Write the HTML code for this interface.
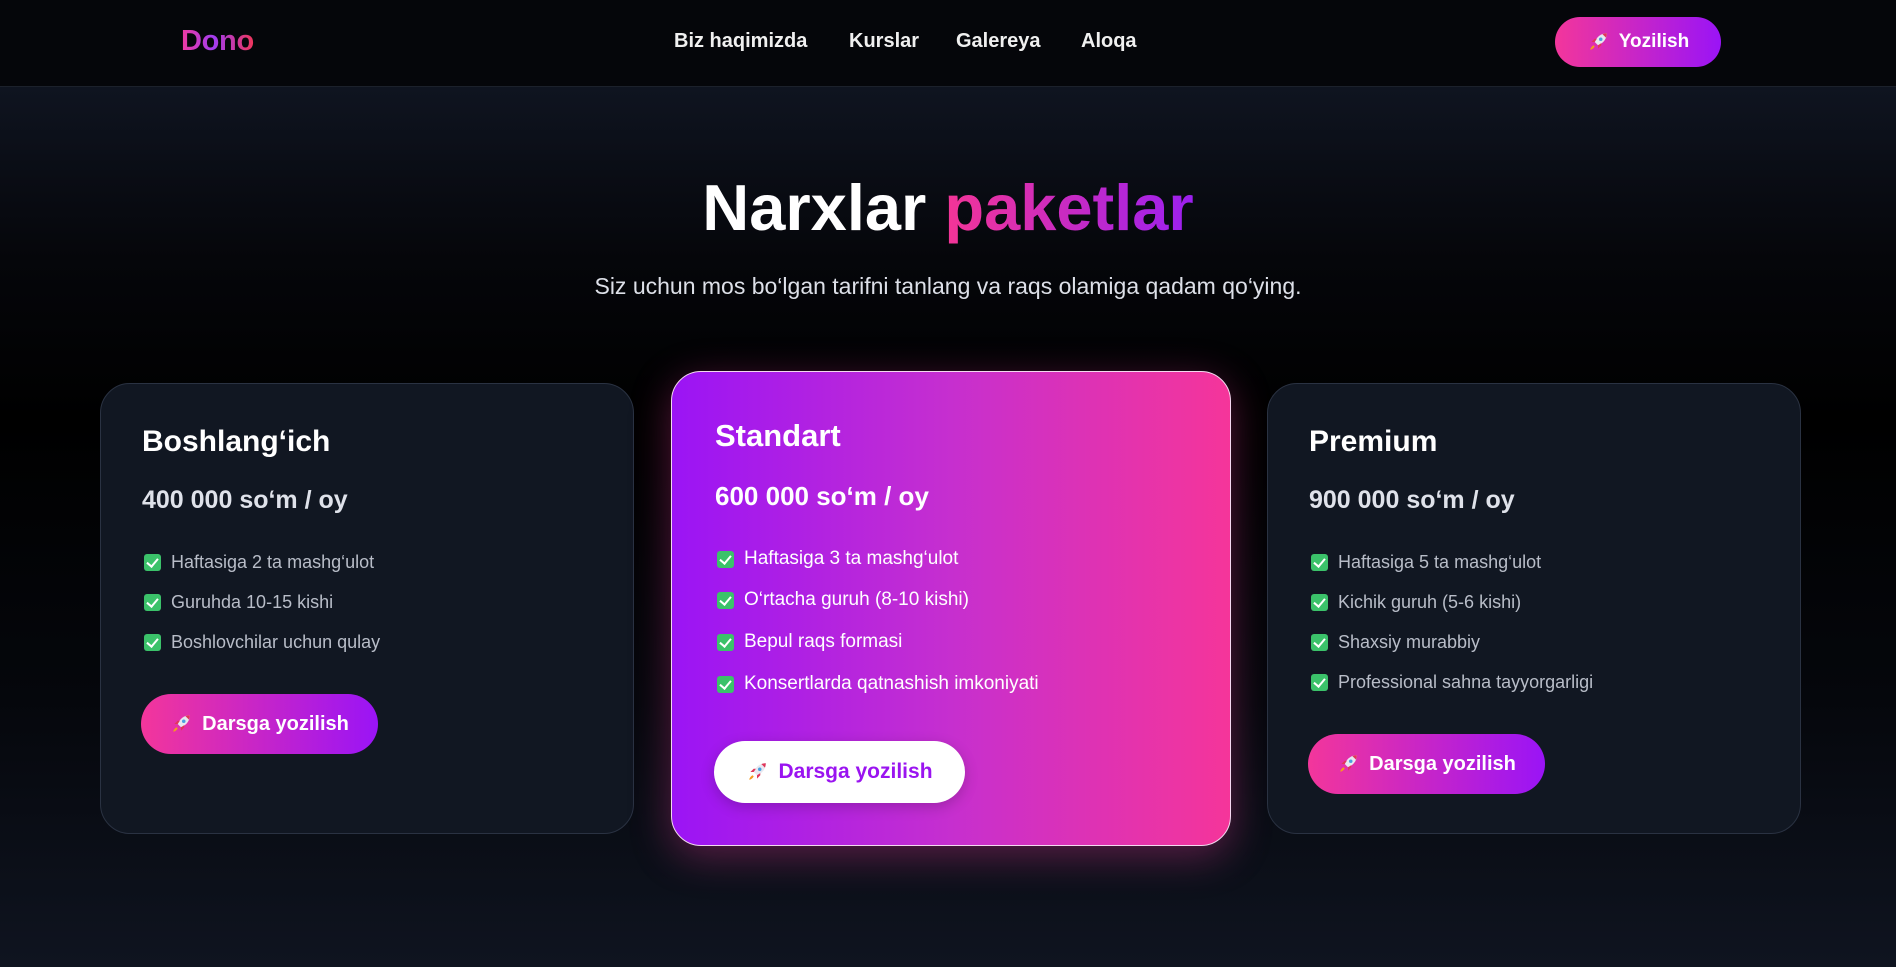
<!DOCTYPE html>
<html><head><meta charset="utf-8"><style>
*{margin:0;padding:0;box-sizing:border-box}
body{width:1896px;height:967px;overflow:hidden;font-family:"Liberation Sans",sans-serif;color:#fff;
background:linear-gradient(180deg,#0f1420 87px,#05060a 260px,#000 420px,#05070c 700px,#0f1420 967px);position:relative}
.nav{position:absolute;left:0;top:0;width:1896px;height:87px;background:#05060a;border-bottom:1px solid #1c212b}
.logo{position:absolute;left:181px;top:25px;font-size:29px;font-weight:bold;letter-spacing:-0.3px;
background:linear-gradient(90deg,#f03aa0,#a23cf0 45%,#f0365a);-webkit-background-clip:text;color:transparent}
.nl{position:absolute;top:30px;font-size:20px;font-weight:bold;color:#f0f0f0}
.btn{position:absolute;border-radius:40px;display:flex;align-items:center;justify-content:center;font-weight:bold;color:#fff;
background:linear-gradient(90deg,#f3369b,#9a14f6)}
.rk{width:22px;height:22px;margin-right:10px}
h1{position:absolute;left:0;width:1896px;top:170px;text-align:center;font-size:65px;font-weight:bold;letter-spacing:0px}
h1 span{background:linear-gradient(90deg,#f43596,#9b20f0);-webkit-background-clip:text;color:transparent}
.sub{position:absolute;left:0;width:1896px;top:273px;text-align:center;font-size:23px;color:#dde0e8}
.card{position:absolute;border-radius:30px;background:#111722;border:1px solid #2a3242}
.card .t{position:absolute;font-size:30px;font-weight:bold}
.card .p{position:absolute;font-size:25px;font-weight:bold;color:#dfe2ea}
.card .f{position:absolute;font-size:18px;color:#b8bdc8;display:flex;align-items:center}
.ck{width:17px;height:17px;border-radius:3px;background:#3bc26a;margin-right:10px;position:relative;flex:none}
.ck:after{content:"";position:absolute;left:5px;top:2px;width:5px;height:9px;border:solid #fff;border-width:0 2.5px 2.5px 0;transform:rotate(40deg)}
.mid{background:linear-gradient(90deg,#9b14f5,#c62fcf 50%,#f5359a);border:1.5px solid #f4d8f0;box-shadow:0 10px 40px rgba(240,60,160,0.35)}
.mid .f{color:#fff;font-size:19px}
.mid .p{color:#fff}
</style></head><body>
<svg width="0" height="0" style="position:absolute"><defs>
<symbol id="r" viewBox="0 0 20 20"><path d="M18 2C13 2 9 5 7 10l3 3c5-2 8-6 8-11z" fill="#e8e8f0"/><path d="M18 2c-1 0-3 .3-4 .8l3.2 3.2C17.7 5 18 3 18 2z" fill="#e0365a"/><circle cx="12.5" cy="7.5" r="1.6" fill="#4aa0e0"/><path d="M7 10l-3 0 3-3 2 0zM10 13v3l3-3v-2z" fill="#e0365a"/><path d="M6 13c-2 1-3 3-3 4 1 0 3-1 4-3z" fill="#f59a20"/></symbol>
</defs></svg>
<div class="nav">
<div class="logo">Dono</div>
<div class="nl" style="left:674px">Biz haqimizda</div>
<div class="nl" style="left:849px">Kurslar</div>
<div class="nl" style="left:956px">Galereya</div>
<div class="nl" style="left:1081px">Aloqa</div>
<div class="btn" style="left:1555px;top:17px;width:166px;height:50px;font-size:19px"><svg class="rk"><use href="#r"/></svg>Yozilish</div>
</div>
<h1>Narxlar <span>paketlar</span></h1>
<div class="sub">Siz uchun mos bo‘lgan tarifni tanlang va raqs olamiga qadam qo‘ying.</div>

<div class="card" style="left:100px;top:383px;width:534px;height:451px">
<div class="t" style="left:41px;top:41px">Boshlang‘ich</div>
<div class="p" style="left:41px;top:102px">400 000 so‘m / oy</div>
<div class="f" style="left:43px;top:168px"><span class="ck"></span>Haftasiga 2 ta mashg‘ulot</div>
<div class="f" style="left:43px;top:208px"><span class="ck"></span>Guruhda 10-15 kishi</div>
<div class="f" style="left:43px;top:248px"><span class="ck"></span>Boshlovchilar uchun qulay</div>
<div class="btn" style="left:40px;top:310px;width:237px;height:60px;font-size:20px"><svg class="rk"><use href="#r"/></svg>Darsga yozilish</div>
</div>

<div class="card mid" style="left:671px;top:371px;width:560px;height:475px">
<div class="t" style="left:43px;top:46px;font-size:31px">Standart</div>
<div class="p" style="left:43px;top:109px;font-size:26px">600 000 so‘m / oy</div>
<div class="f" style="left:45px;top:176px"><span class="ck"></span>Haftasiga 3 ta mashg‘ulot</div>
<div class="f" style="left:45px;top:217px"><span class="ck"></span>O‘rtacha guruh (8-10 kishi)</div>
<div class="f" style="left:45px;top:259px"><span class="ck"></span>Bepul raqs formasi</div>
<div class="f" style="left:45px;top:301px"><span class="ck"></span>Konsertlarda qatnashish imkoniyati</div>
<div class="btn" style="left:42px;top:369px;width:251px;height:62px;font-size:21px;background:#fff;color:#9a14f0;box-shadow:0 4px 14px rgba(0,0,0,0.2)"><svg class="rk"><use href="#r"/></svg>Darsga yozilish</div>
</div>

<div class="card" style="left:1267px;top:383px;width:534px;height:451px">
<div class="t" style="left:41px;top:41px">Premium</div>
<div class="p" style="left:41px;top:102px">900 000 so‘m / oy</div>
<div class="f" style="left:43px;top:168px"><span class="ck"></span>Haftasiga 5 ta mashg‘ulot</div>
<div class="f" style="left:43px;top:208px"><span class="ck"></span>Kichik guruh (5-6 kishi)</div>
<div class="f" style="left:43px;top:248px"><span class="ck"></span>Shaxsiy murabbiy</div>
<div class="f" style="left:43px;top:288px"><span class="ck"></span>Professional sahna tayyorgarligi</div>
<div class="btn" style="left:40px;top:350px;width:237px;height:60px;font-size:20px"><svg class="rk"><use href="#r"/></svg>Darsga yozilish</div>
</div>
</body></html>
